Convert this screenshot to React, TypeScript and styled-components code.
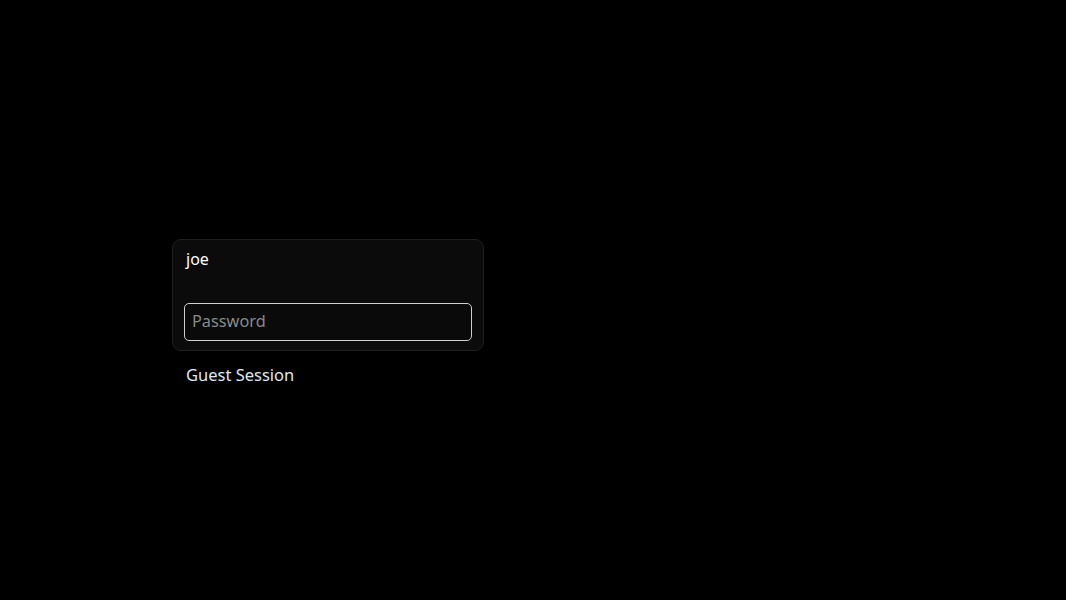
import React from "react";
import styled, { createGlobalStyle } from "styled-components";

const Global = createGlobalStyle`
  html, body { margin: 0; padding: 0; background: #000; }
  body { font-family: "Noto Sans", "Open Sans", sans-serif; }
`;

const Screen = styled.div`
  width: 1066px;
  height: 600px;
  background: #000;
  box-sizing: border-box;
  padding: 239px 0 0 172px;
  display: flex;
  flex-direction: column;
  align-items: flex-start;
`;

const Card = styled.div`
  width: 312px;
  box-sizing: border-box;
  background: #0b0b0b;
  border: 1px solid #1f1f1f;
  border-radius: 9px;
  padding: 9px 11px 9px 11px;
  display: flex;
  flex-direction: column;
`;

const Name = styled.div`
  color: #ffffff;
  font-size: 16px;
  line-height: 20px;
  padding-left: 2px;
`;

const Input = styled.input`
  margin-top: 34px;
  height: 38px;
  box-sizing: border-box;
  width: 100%;
  background: #0a0a0a;
  border: 1px solid #d0d0d0;
  border-radius: 5px;
  padding: 0 8px 2px 7px;
  color: #fff;
  font-family: inherit;
  font-size: 16.3px;
  outline: none;
  &::placeholder { color: #858a8e; }
`;

const Guest = styled.div`
  margin-top: 14px;
  margin-left: 14px;
  color: #dfe8f0;
  font-size: 16.5px;
  line-height: 20px;
`;

export default function App() {
  return (
    <Screen>
      <Global />
      <Card>
        <Name>joe</Name>
        <Input placeholder="Password" />
      </Card>
      <Guest>Guest Session</Guest>
    </Screen>
  );
}
